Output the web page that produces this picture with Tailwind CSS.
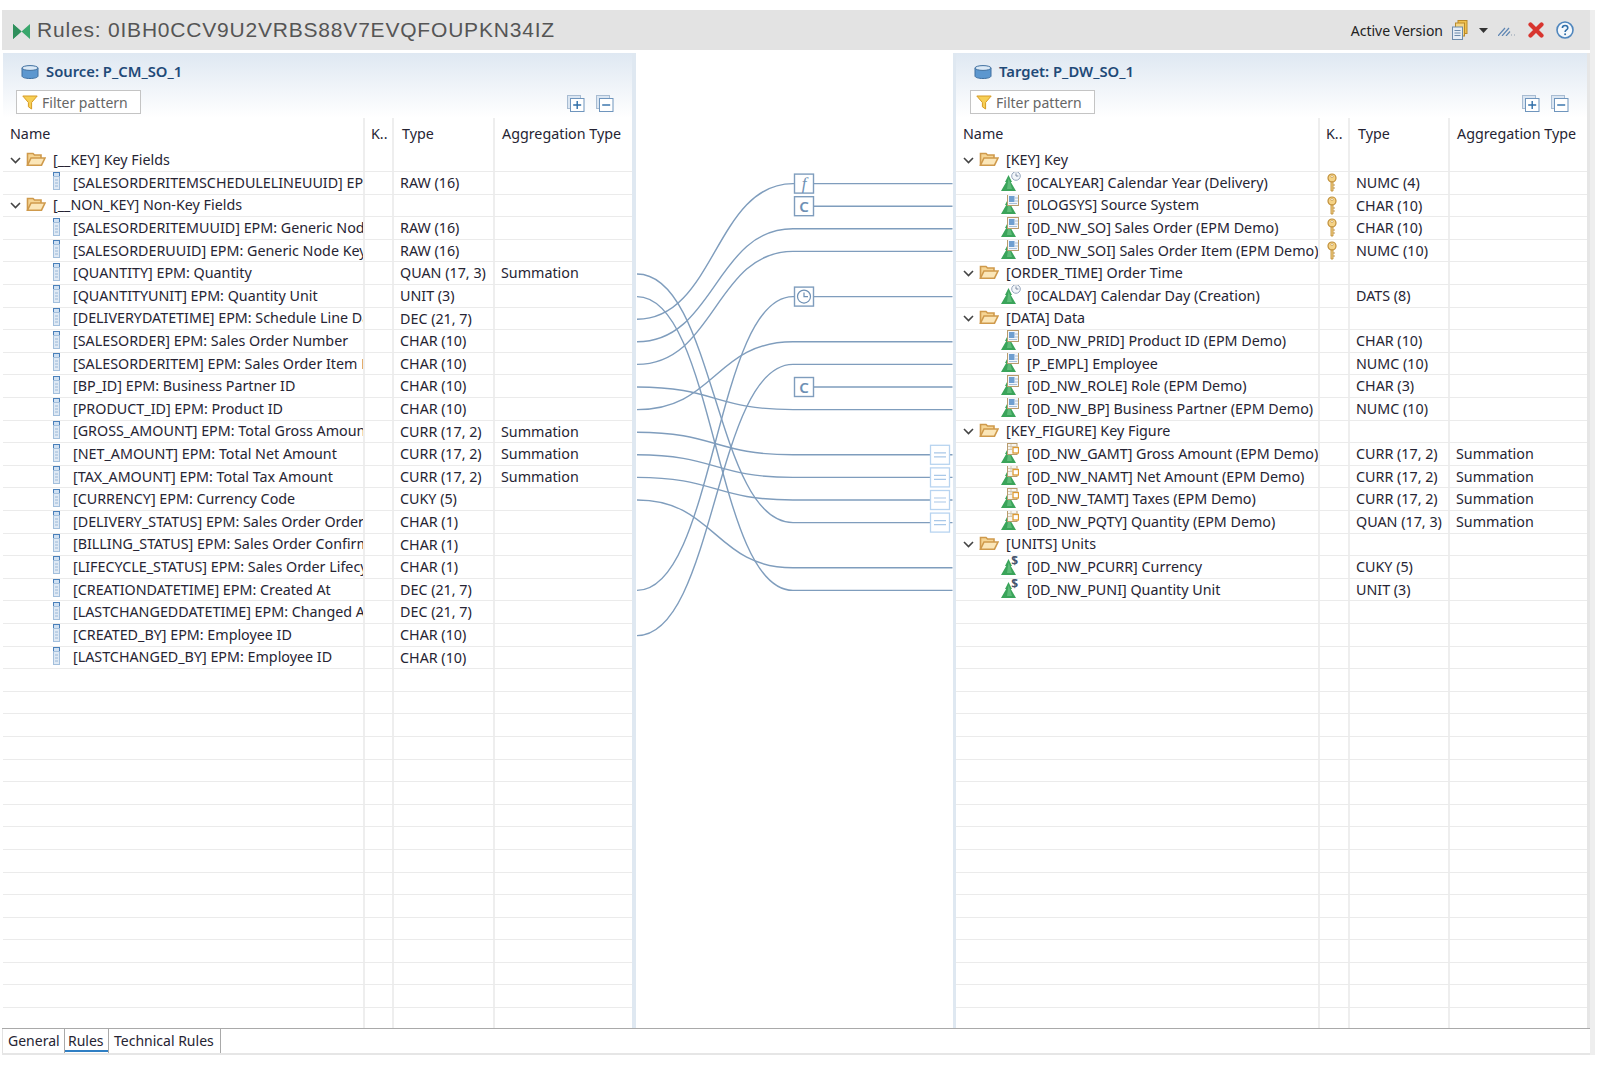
<!DOCTYPE html>
<html lang="en">
<head>
<meta charset="UTF-8">
<title>Rules</title>
<script src="https://cdn.jsdelivr.net/npm/@tailwindcss/browser@4"></script>
</head>
<body class="bg-white h-[1066px] overflow-hidden pt-[10px] font-['Noto_Sans',sans-serif] text-[14.300px] text-[#262433]">

<!-- shared icons -->
<svg class="hidden">
  <symbol id="folder" viewBox="0 0 20 16">
    <path d="M1.500 14V2.500h5.500l1.500 1.500h6.500V7" fill="#f6d594" stroke="#cf9a4c" stroke-width="1.600"/>
    <path d="M1.500 14.200 L5 7 H19 L15.500 14.200Z" fill="#fbe6b8" stroke="#cf9a4c" stroke-width="1.600"/>
  </symbol>
  <symbol id="field" viewBox="0 0 7 18">
    <rect x=".5" y=".5" width="6" height="4" fill="#cfe0f2" stroke="#4a80ba"/>
    <rect x=".5" y="4.500" width="6" height="13" fill="#dfe9f4" stroke="#a3bfdc"/>
    <path d="M2 8h3M2 11h3M2 14h3" stroke="#9ab8d8"/>
  </symbol>
  <symbol id="tree" viewBox="0 0 15 16">
    <path d="M7.500 0 L11 7 H9.800 L15 16 H0 L5.200 7 H4Z" fill="#3aa45a"/>
    <path d="M7.500 3 L9 7 L11 14 H6Z" fill="#5dbb78"/>
  </symbol>
  <symbol id="chartable" viewBox="0 0 12 12">
    <rect x=".5" y=".5" width="11" height="11" fill="#f4f7fb" stroke="#b89b6c"/>
    <rect x="2" y="2" width="5.500" height="6" fill="#6f9fd0"/>
    <path d="M8 4h3M8 7h3M2 9.500h8" stroke="#a9bfd8"/>
  </symbol>
  <symbol id="kftable" viewBox="0 0 12 12">
    <rect x=".5" y=".5" width="9.500" height="11" fill="#f7f5f0" stroke="#b89b6c"/>
    <path d="M1 3.500h8M1 6.500h4M4 1v5" stroke="#d3c7b0"/>
    <rect x="6" y="4.500" width="5.500" height="5.500" fill="#fff" stroke="#dd9a32" stroke-width="1.300"/>
  </symbol>
  <symbol id="clock" viewBox="0 0 10 10">
    <circle cx="5" cy="5" r="4.300" fill="#f3f6fa" stroke="#95a6bc"/>
    <path d="M5 2.400V5h2.400" fill="none" stroke="#7a8aa2"/>
  </symbol>
  <symbol id="key" viewBox="0 0 10 20">
    <circle cx="5" cy="5" r="4" fill="#f5d387" stroke="#c08f3a" stroke-width="1.200"/>
    <circle cx="5" cy="3.600" r="1.100" fill="#fff" stroke="#c08f3a" stroke-width=".6"/>
    <path d="M4 9h2v9H4zM6 12h2M6 15h2" fill="#f5d387" stroke="#c08f3a" stroke-width=".9"/>
  </symbol>
  <symbol id="db" viewBox="0 0 18 14">
    <path d="M1 3v8c0 1.500 3.500 2.500 8 2.500s8-1 8-2.500V3Z" fill="#5c97cf" stroke="#3f6f9f"/>
    <ellipse cx="9" cy="3" rx="8" ry="2.400" fill="#dbe9f6" stroke="#3f6f9f"/>
  </symbol>
  <symbol id="expand" viewBox="0 0 18 17">
    <rect x=".5" y=".5" width="13" height="13" fill="#dbe6f2" stroke="#a8bcd2"/>
    <rect x="3.500" y="3.500" width="13.500" height="13" fill="#fff" stroke="#6f95bd"/>
    <path d="M10.200 6v8M6.200 10h8" stroke="#2f6ea8" stroke-width="1.400"/>
  </symbol>
  <symbol id="collapse" viewBox="0 0 18 17">
    <rect x=".5" y=".5" width="13" height="13" fill="#dbe6f2" stroke="#a8bcd2"/>
    <rect x="3.500" y="3.500" width="13.500" height="13" fill="#fff" stroke="#6f95bd"/>
    <path d="M6.200 10h8" stroke="#2f6ea8" stroke-width="1.400"/>
  </symbol>
  <symbol id="funnel" viewBox="0 0 16 15">
    <path d="M.8 1h14.400L9.600 7.500V14L6.400 11.800V7.500Z" fill="#f7cf55" stroke="#d69b25"/>
  </symbol>
</svg>

<div class="ml-[2px] w-[1593px] h-[1045px] border-r-[5px] border-[#eeeeee]">

<!-- title bar -->
<div class="h-[40px] bg-[#e3e3e3] flex items-center pl-[11px] pr-[16px]">
  <svg class="w-[17px] h-[15px] mt-[3px]" viewBox="0 0 17 15"><path d="M0 0 L8.500 7.500 L0 15Z M17 0 L8.500 7.500 L17 15Z" fill="#3aa76d"/><path d="M0 0 L8.500 7.500 L0 15Z" fill="#2f8f5c"/></svg>
  <span class="ml-[7px] font-['Liberation_Sans',sans-serif] text-[21px] tracking-[0.8px] text-[#555]">Rules: 0IBH0CCV9U2VRBS88V7EVQFOUPKN34IZ</span>
  <span class="ml-auto text-[14px] text-[#222]">Active Version</span>
  <svg class="ml-[9px] w-[16px] h-[20px]" viewBox="0 0 16 20">
    <rect x="6" y=".5" width="9" height="13" fill="#f2c14e" stroke="#b98a2a"/>
    <rect x="3.500" y="3" width="9" height="13" fill="#f5d584" stroke="#b98a2a"/>
    <rect x=".5" y="7" width="10" height="12.500" fill="#e6edf5" stroke="#6d8bab"/>
    <path d="M2.500 10.500h6M2.500 13h6M2.500 15.500h6" stroke="#6d8bab"/>
  </svg>
  <svg class="ml-[11px] w-[9px] h-[5px]" viewBox="0 0 9 5"><path d="M0 0h9L4.500 5Z" fill="#333"/></svg>
  <svg class="ml-[10px] w-[19px] h-[9px] mt-[2px]" viewBox="0 0 19 9">
    <path d="M0 9 L7 1M4 9 L11 1M8 9 L12 4.500" stroke="#5f86b3" stroke-width="1.200"/>
    <path d="M13 8h1M16 8h1" stroke="#8d9db0" stroke-width="1.200"/>
  </svg>
  <svg class="ml-[11px] w-[16px] h-[16px]" viewBox="0 0 16 16"><path d="M2.500 2.500 L13.500 13.500M13.500 2.500 L2.500 13.500" stroke="#d8352f" stroke-width="4.200" stroke-linecap="round"/></svg>
  <svg class="ml-[12px] w-[18px] h-[18px]" viewBox="0 0 18 18">
    <circle cx="9" cy="9" r="8" fill="#f4f8fc" stroke="#4f86bd" stroke-width="1.600"/>
    <path d="M6.400 7c0-1.600 1.200-2.500 2.700-2.500S11.800 5.400 11.800 6.900c0 2-2.700 2-2.700 4" fill="none" stroke="#2f6ea8" stroke-width="1.600"/>
    <circle cx="9.100" cy="13.200" r="1" fill="#2f6ea8"/>
  </svg>
</div>

<!-- editor body -->
<div class="mt-[3px] h-[975px] flex">
  <section class="w-[630px] pl-[1px] flex flex-col">
    <div class="h-[65px] shrink-0 bg-gradient-to-b from-[#dfe8f2] to-white pl-[13px] pr-[18px]">
      <div class="flex items-center h-[37px] pl-[5px]">
        <svg class="w-[18px] h-[14px]"><use href="#db"/></svg>
        <span class="ml-[7px] font-semibold text-[14.800px] text-[#1f4a78]">Source: P_CM_SO_1</span>
      </div>
      <div class="flex items-start">
        <div class="w-[125px] h-[24px] bg-white border border-[#c4c4c4] flex items-center pl-[5px] text-[14px] text-[#666]">
          <svg class="w-[16px] h-[15px]"><use href="#funnel"/></svg><span class="ml-[4px]">Filter pattern</span>
        </div>
        <svg class="ml-auto mt-[5px] w-[18px] h-[17px]"><use href="#expand"/></svg>
        <svg class="ml-[11px] mt-[5px] w-[18px] h-[17px]"><use href="#collapse"/></svg>
      </div>
    </div>
    <div id="source" class="flex-1 overflow-hidden"></div>
  </section>

  <!-- mapping lines between the two trees -->
  <div class="w-[324px] shrink-0 border-l-[4px] border-r-[3px] border-[#dfe8f1] bg-white relative">
    <svg id="links" class="absolute top-0 left-[-4px] w-[324px] h-[975px]" viewBox="632 53 324 975"></svg>
  </div>

  <section class="w-[634px] border-r-[3px] border-[#e6e6e6] flex flex-col">
    <div class="h-[65px] shrink-0 bg-gradient-to-b from-[#dfe8f2] to-white pr-[18px]">
      <div class="flex items-center h-[37px] pl-[18px]">
        <svg class="w-[18px] h-[14px]"><use href="#db"/></svg>
        <span class="ml-[7px] font-semibold text-[14.800px] text-[#1f4a78]">Target: P_DW_SO_1</span>
      </div>
      <div class="flex items-start pl-[14px]">
        <div class="w-[125px] h-[24px] bg-white border border-[#c4c4c4] flex items-center pl-[5px] text-[14px] text-[#666]">
          <svg class="w-[16px] h-[15px]"><use href="#funnel"/></svg><span class="ml-[4px]">Filter pattern</span>
        </div>
        <svg class="ml-auto mt-[5px] w-[18px] h-[17px]"><use href="#expand"/></svg>
        <svg class="ml-[11px] mt-[5px] w-[18px] h-[17px]"><use href="#collapse"/></svg>
      </div>
    </div>
    <div id="target" class="flex-1 overflow-hidden"></div>
  </section>
</div>

<!-- tabs -->
<div class="w-[1588px] h-[27px] border-t-[1.500px] border-[#a9a9a9] border-b-2 border-b-[#e6e6e6] flex text-[14px] leading-[23px]">
  <div class="w-[62px] pl-[5px] border-l border-[#e2e2e2]">General</div>
  <div class="w-[45px] pl-[3px] border-x border-[#a9a9a9] relative">Rules<div class="absolute left-0 right-0 bottom-[1px] h-[2px] bg-[#2f7fc4]"></div></div>
  <div class="w-[112px] pl-[5px] border-r border-[#a9a9a9]">Technical Rules</div>
</div>

</div>

<script>
  const sourceRows = [
    ['g', '[__KEY] Key Fields'],
    ['f', '[SALESORDERITEMSCHEDULELINEUUID] EPM', '', 'RAW (16)'],
    ['g', '[__NON_KEY] Non-Key Fields'],
    ['f', '[SALESORDERITEMUUID] EPM: Generic Node', '', 'RAW (16)'],
    ['f', '[SALESORDERUUID] EPM: Generic Node Key', '', 'RAW (16)'],
    ['f', '[QUANTITY] EPM: Quantity', '', 'QUAN (17, 3)', 'Summation'],
    ['f', '[QUANTITYUNIT] EPM: Quantity Unit', '', 'UNIT (3)'],
    ['f', '[DELIVERYDATETIME] EPM: Schedule Line Date', '', 'DEC (21, 7)'],
    ['f', '[SALESORDER] EPM: Sales Order Number', '', 'CHAR (10)'],
    ['f', '[SALESORDERITEM] EPM: Sales Order Item Pos', '', 'CHAR (10)'],
    ['f', '[BP_ID] EPM: Business Partner ID', '', 'CHAR (10)'],
    ['f', '[PRODUCT_ID] EPM: Product ID', '', 'CHAR (10)'],
    ['f', '[GROSS_AMOUNT] EPM: Total Gross Amount', '', 'CURR (17, 2)', 'Summation'],
    ['f', '[NET_AMOUNT] EPM: Total Net Amount', '', 'CURR (17, 2)', 'Summation'],
    ['f', '[TAX_AMOUNT] EPM: Total Tax Amount', '', 'CURR (17, 2)', 'Summation'],
    ['f', '[CURRENCY] EPM: Currency Code', '', 'CUKY (5)'],
    ['f', '[DELIVERY_STATUS] EPM: Sales Order Ordering', '', 'CHAR (1)'],
    ['f', '[BILLING_STATUS] EPM: Sales Order Confirmation', '', 'CHAR (1)'],
    ['f', '[LIFECYCLE_STATUS] EPM: Sales Order Lifecycle', '', 'CHAR (1)'],
    ['f', '[CREATIONDATETIME] EPM: Created At', '', 'DEC (21, 7)'],
    ['f', '[LASTCHANGEDDATETIME] EPM: Changed At', '', 'DEC (21, 7)'],
    ['f', '[CREATED_BY] EPM: Employee ID', '', 'CHAR (10)'],
    ['f', '[LASTCHANGED_BY] EPM: Employee ID', '', 'CHAR (10)'],
  ];

  const targetRows = [
    ['g', '[KEY] Key'],
    ['c', '[0CALYEAR] Calendar Year (Delivery)', 'k', 'NUMC (4)'],
    ['t', '[0LOGSYS] Source System', 'k', 'CHAR (10)'],
    ['t', '[0D_NW_SO] Sales Order (EPM Demo)', 'k', 'CHAR (10)'],
    ['t', '[0D_NW_SOI] Sales Order Item (EPM Demo)', 'k', 'NUMC (10)'],
    ['g', '[ORDER_TIME] Order Time'],
    ['c', '[0CALDAY] Calendar Day (Creation)', '', 'DATS (8)'],
    ['g', '[DATA] Data'],
    ['t', '[0D_NW_PRID] Product ID (EPM Demo)', '', 'CHAR (10)'],
    ['t', '[P_EMPL] Employee', '', 'NUMC (10)'],
    ['t', '[0D_NW_ROLE] Role (EPM Demo)', '', 'CHAR (3)'],
    ['t', '[0D_NW_BP] Business Partner (EPM Demo)', '', 'NUMC (10)'],
    ['g', '[KEY_FIGURE] Key Figure'],
    ['n', '[0D_NW_GAMT] Gross Amount (EPM Demo)', '', 'CURR (17, 2)', 'Summation'],
    ['n', '[0D_NW_NAMT] Net Amount (EPM Demo)', '', 'CURR (17, 2)', 'Summation'],
    ['n', '[0D_NW_TAMT] Taxes (EPM Demo)', '', 'CURR (17, 2)', 'Summation'],
    ['n', '[0D_NW_PQTY] Quantity (EPM Demo)', '', 'QUAN (17, 3)', 'Summation'],
    ['g', '[UNITS] Units'],
    ['d', '[0D_NW_PCURR] Currency', '', 'CUKY (5)'],
    ['d', '[0D_NW_PUNI] Quantity Unit', '', 'UNIT (3)'],
  ];

  function nameCell(row) {
    const kind = row[0], label = row[1];
    if (kind == 'g') {
      return `<svg class="ml-[7px] w-[11px] h-[7px] shrink-0" viewBox="0 0 11 7"><path d="M1 1l4.500 4.500L10 1" fill="none" stroke="#444" stroke-width="1.600"/></svg>
        <svg class="ml-[5px] w-[20px] h-[16px] shrink-0 -mt-[2px]"><use href="#folder"/></svg>
        <span class="ml-[7px]">${label}</span>`;
    }
    let icon = '<svg class="ml-[50px] w-[7px] h-[18px] shrink-0 -mt-[3px]"><use href="#field"/></svg><span class="ml-[13px]">';
    if (kind != 'f') {
      let badge = '';
      if (kind == 'c') badge = '<svg class="absolute right-[-2px] top-0 w-[10px] h-[10px]"><use href="#clock"/></svg>';
      if (kind == 't') badge = '<svg class="absolute right-0 top-0 w-[12px] h-[12px]"><use href="#chartable"/></svg>';
      if (kind == 'n') badge = '<svg class="absolute right-0 top-0 w-[12px] h-[12px]"><use href="#kftable"/></svg>';
      if (kind == 'd') badge = '<span class="absolute right-[1px] top-[-5px] text-[12px] font-bold text-[#46566e]">$</span>';
      icon = `<span class="relative ml-[45px] w-[18px] h-[20px] shrink-0 -mt-[3px]"><svg class="absolute left-0 bottom-0 w-[15px] h-[16px]"><use href="#tree"/></svg>${badge}</span><span class="ml-[8px]">`;
    }
    return icon + label + '</span>';
  }

  function table(rows, widths) {
    const [nameW, keyW, typeW] = widths;
    const head = `<div class="flex h-[31.500px] leading-[31px]">
        <div class="pl-[7px] border-r-2 border-[#eeeeee]" style="width:${nameW}px">Name</div>
        <div class="pl-[6px] border-r-2 border-[#eeeeee]" style="width:${keyW}px">K..</div>
        <div class="pl-[8px] border-r-2 border-[#eeeeee]" style="width:${typeW}px">Type</div>
        <div class="pl-[7px] flex-1">Aggregation Type</div>
      </div>`;
    let body = '';
    for (let i = 0; i < 39; i++) {
      const r = rows[i] || ['e', ''];
      const name = r[0] == 'e' ? '' : nameCell(r);
      const key = r[2] == 'k' ? '<svg class="ml-[7px] w-[10px] h-[20px]"><use href="#key"/></svg>' : '';
      body += `<div class="flex h-[22.600px] leading-[22px] border-b border-[#ebebeb]">
        <div class="flex items-center overflow-hidden whitespace-nowrap border-r-2 border-[#eeeeee]" style="width:${nameW}px">${name}</div>
        <div class="border-r-2 border-[#eeeeee] pt-[1px]" style="width:${keyW}px">${key}</div>
        <div class="pl-[6px] whitespace-nowrap border-r-2 border-[#eeeeee]" style="width:${typeW}px">${r[3] || ''}</div>
        <div class="pl-[6px] flex-1">${r[4] || ''}</div>
      </div>`;
    }
    return head + body;
  }

  document.getElementById('source').innerHTML = table(sourceRows, [362, 29, 101]);
  document.getElementById('target').innerHTML = table(targetRows, [364, 30, 100]);

  // row index -> y centre in page coordinates
  const rowY = n => 161 + 22.6 * n;

  // [source row, target row]
  const links = [[7, 1], [8, 3], [9, 4], [19, 6], [11, 8], [21, 9], [10, 11], [12, 13], [13, 14], [14, 15], [5, 16], [15, 18], [6, 19]];
  let svg = '';
  for (const [s, t] of links) {
    const y1 = rowY(s), y2 = rowY(t);
    svg += `<path d="M637 ${y1} C715 ${y1} 715 ${y2} 793 ${y2} H952.500" fill="none" stroke="#7f9dbd" stroke-width="1.400"/>`;
  }
  // constants, no source field
  svg += `<path d="M804 ${rowY(2)} H952.500 M804 ${rowY(10)} H952.500" stroke="#7f9dbd" stroke-width="1.400"/>`;

  const box = (y, inner) => `<rect x="794.500" y="${y - 9.500}" width="19" height="19" fill="#fff" stroke="#7f9dbd" stroke-width="1.400"/>${inner}`;
  svg += box(rowY(1), `<text x="804" y="${rowY(1) + 5.500}" text-anchor="middle" fill="#6e90b4" font-size="17" class="font-['Liberation_Serif',serif] italic">f</text>`);
  for (const n of [2, 10]) {
    svg += box(rowY(n), `<text x="804" y="${rowY(n) + 5.500}" text-anchor="middle" fill="#6e90b4" font-size="15" font-weight="600" class="font-['Noto_Sans',sans-serif]">C</text>`);
  }
  svg += box(rowY(6), `<circle cx="804" cy="${rowY(6)}" r="6.500" fill="none" stroke="#6e90b4" stroke-width="1.200"/><path d="M804 ${rowY(6) - 4}V${rowY(6)}h4" fill="none" stroke="#6e90b4" stroke-width="1.200"/>`);
  for (const t of [13, 14, 15, 16]) {
    const y = rowY(t);
    svg += `<rect x="930.500" y="${y - 9.500}" width="19" height="19" fill="#fff" stroke="#b8d4f0" stroke-width="1.300"/><path d="M934 ${y - 2}h12M934 ${y + 2}h12" stroke="#a9c8e8" stroke-width="1.200"/>`;
  }
  document.getElementById('links').innerHTML = svg;
</script>
</body>
</html>
